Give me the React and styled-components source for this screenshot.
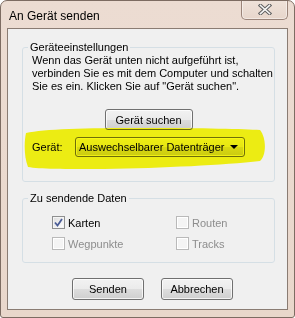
import React from 'react';
import styled, { createGlobalStyle, css } from 'styled-components';

const GlobalStyle = createGlobalStyle`
  html, body {
    margin: 0;
    padding: 0;
    background: #ffffff;
  }
  body {
    font-family: "Liberation Sans", Arial, sans-serif;
    font-size: 11px;
  }
`;

const Window = styled.div`
  position: relative;
  box-sizing: border-box;
  width: 295px;
  height: 318px;
  display: flex;
  flex-direction: column;
  background: linear-gradient(180deg, #ecdcd2 0%, #e9d7cb 100%);
  border: 1px solid #7d6c62;
  border-radius: 7px 7px 3px 3px;
  overflow: hidden;
`;

const TitleBar = styled.div`
  height: 27px;
  display: flex;
  justify-content: space-between;
  align-items: flex-start;
  padding-left: 8px;
`;

const Title = styled.div`
  margin-top: 7px;
  font-size: 12px;
  line-height: 16px;
  color: #000;
`;

const CloseButton = styled.div`
  box-sizing: border-box;
  width: 47px;
  height: 20px;
  margin-right: 6px;
  margin-top: -1px;
  display: flex;
  align-items: center;
  justify-content: center;
  border: 1px solid #9a8479;
  border-top: none;
  border-radius: 0 0 5px 5px;
  background: linear-gradient(180deg, #efe2da 0%, #e7d6cb 100%);
  box-shadow: inset 0 0 0 1px rgba(255, 255, 255, 0.45);
`;

const Client = styled.div`
  flex: 1;
  margin: 0 6px 7px 6px;
  border: 1px solid #8a7c73;
  background: #f0f0f0;
  display: flex;
  flex-direction: column;
  padding: 11px 12px 0 14px;
`;

const Group = styled.fieldset`
  margin: ${props => props.$gap || 0}px 0 0 0;
  padding: 0;
  border: 1px solid #d5dfe5;
  border-radius: 3px;
  min-width: 0;
`;

const Legend = styled.legend`
  padding: 0 2px;
  margin-left: 5px;
  font-size: 11px;
  line-height: 14px;
  color: #000;
`;

const GroupBody = styled.div`
  display: flex;
  flex-direction: column;
  padding: ${props => props.$pad};
`;

const Info = styled.p`
  margin: 0;
  font-size: 11px;
  line-height: 13px;
  white-space: nowrap;
  color: #000;
`;

const buttonLook = css`
  box-sizing: border-box;
  border: 1px solid #707070;
  border-radius: 3px;
  background: linear-gradient(180deg, #f2f2f2 0%, #ebebeb 50%, #dddddd 51%, #cfcfcf 100%);
  box-shadow: inset 0 0 0 1px rgba(255, 255, 255, 0.75);
`;

const Button = styled.button`
  ${buttonLook};
  width: ${props => props.$width || 72}px;
  height: ${props => props.$height || 22}px;
  padding: 0;
  font-family: inherit;
  font-size: 11px;
  color: #000;
  align-self: ${props => props.$center ? 'center' : 'auto'};
  margin-top: ${props => props.$top || 0}px;
`;

const DeviceRow = styled.div`
  display: flex;
  align-items: center;
  margin-top: 7px;
`;

const DeviceLabel = styled.span`
  width: 43px;
  color: #000;
`;

const Combo = styled.div`
  ${buttonLook};
  width: 170px;
  height: 20px;
  display: flex;
  align-items: center;
  justify-content: space-between;
  padding: 0 6px 0 3px;
  white-space: nowrap;
  color: #000;
`;

const Arrow = styled.span`
  width: 0;
  height: 0;
  border-left: 4px solid transparent;
  border-right: 4px solid transparent;
  border-top: 4px solid #000;
`;

const Highlight = styled.svg`
  position: absolute;
  left: 23px;
  top: 126px;
  mix-blend-mode: multiply;
  pointer-events: none;
`;

const CheckGrid = styled.div`
  display: grid;
  grid-template-columns: 124px 1fr;
  grid-auto-rows: 21px;
`;

const CheckItem = styled.div`
  display: flex;
  align-items: center;
  gap: 3px;
  color: ${props => props.$disabled ? '#8d8d8d' : '#000'};
`;

const Box = styled.span`
  box-sizing: border-box;
  width: 13px;
  height: 13px;
  display: flex;
  align-items: center;
  justify-content: center;
  border: 1px solid ${props => props.$disabled ? '#b9b9b9' : '#8e8f8f'};
  background: ${props => props.$disabled
    ? '#f4f4f4'
    : 'linear-gradient(135deg, #dcdcdc 0%, #ffffff 100%)'};
  box-shadow: inset 0 0 0 1px ${props => props.$disabled ? '#ffffff' : '#f4f4f4'};
`;

const Footer = styled.div`
  display: flex;
  justify-content: center;
  gap: 17px;
  padding-left: 8px;
  margin-top: 15px;
`;

const CloseGlyph = () => (
  <svg width="14" height="11" viewBox="0 0 14 11">
    <path d="M2.5 1.5 L11.5 9.5 M11.5 1.5 L2.5 9.5" stroke="#5f5f5f" strokeWidth="3.6" strokeLinecap="square" />
    <path d="M2.5 1.5 L11.5 9.5 M11.5 1.5 L2.5 9.5" stroke="#f6f6f6" strokeWidth="1.6" strokeLinecap="square" />
  </svg>
);

const Check = () => (
  <svg width="9" height="9" viewBox="0 0 9 9">
    <path d="M1 4.5 L3.5 7.5 L8 1" fill="none" stroke="#4a5c96" strokeWidth="1.8" />
  </svg>
);

const options = [
  { label: 'Karten', checked: true, disabled: false },
  { label: 'Routen', checked: false, disabled: true },
  { label: 'Wegpunkte', checked: false, disabled: true },
  { label: 'Tracks', checked: false, disabled: true },
];

export default function App() {
  return (
    <>
      <GlobalStyle />
      <Window>
        <TitleBar>
          <Title>An Gerät senden</Title>
          <CloseButton>
            <CloseGlyph />
          </CloseButton>
        </TitleBar>
        <Client>
          <Group>
            <Legend>Geräteeinstellungen</Legend>
            <GroupBody $pad="0 9px 24px 9px">
              <Info>
                Wenn das Gerät unten nicht aufgeführt ist,<br />
                verbinden Sie es mit dem Computer und schalten<br />
                Sie es ein. Klicken Sie auf "Gerät suchen".
              </Info>
              <Button $width={88} $height={21} $center $top={16}>Gerät suchen</Button>
              <DeviceRow>
                <DeviceLabel>Gerät:</DeviceLabel>
                <Combo>
                  <span>Auswechselbarer Datenträger</span>
                  <Arrow />
                </Combo>
              </DeviceRow>
            </GroupBody>
          </Group>
          <Group $gap={9}>
            <Legend>Zu sendende Daten</Legend>
            <GroupBody $pad="7px 9px 8px 29px">
              <CheckGrid>
                {options.map(o => (
                  <CheckItem key={o.label} $disabled={o.disabled}>
                    <Box $disabled={o.disabled}>{o.checked && <Check />}</Box>
                    {o.label}
                  </CheckItem>
                ))}
              </CheckGrid>
            </GroupBody>
          </Group>
          <Footer>
            <Button>Senden</Button>
            <Button>Abbrechen</Button>
          </Footer>
        </Client>
        <Highlight width="242" height="44" viewBox="0 0 242 44">
          <path
            d="M2,6 C20,2 60,1 120,1 C180,1 220,2 236,3 C242,10 243,28 236,34 C200,38 140,41 80,42 C40,42 15,42 4,40 C0,30 0,15 2,6 Z"
            fill="#fbfb14"
          />
        </Highlight>
      </Window>
    </>
  );
}
